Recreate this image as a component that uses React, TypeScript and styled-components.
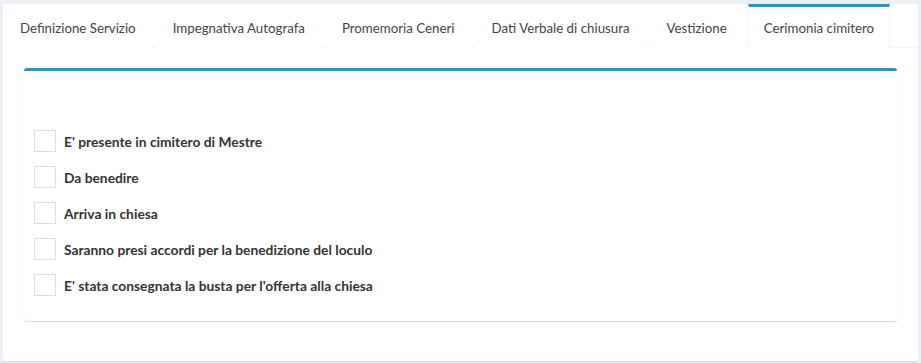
import React from 'react'
import styled, { createGlobalStyle } from 'styled-components'

const GlobalStyle = createGlobalStyle`
    html, body {
        margin: 0;
        padding: 0;
        background: #ecf0f5;
        font-family: Lato, "Open Sans", sans-serif;
        color: #333;
    }
`

const Page = styled.div`
    padding: 4px 3px 2px 3px;
`

const TabsBox = styled.div`
    background: #fff;
    border-radius: 3px;
    box-shadow: 0 1px 1px rgba(0, 0, 0, 0.1);
    height: 357px;
    box-sizing: border-box;
`

const TabBar = styled.ul`
    display: flex;
    margin: 0;
    padding: 0;
    list-style: none;
    border-bottom: 1px solid #f4f4f4;
    height: 44px;
    box-sizing: border-box;
`

const Tab = styled.li<{ $active?: boolean }>`
    display: flex;
    align-items: center;
    padding: 0 15px;
    margin-right: 5px;
    margin-bottom: -1px;
    font-size: 13.3px;
    color: #444;
    box-sizing: border-box;
    border-top: 3px solid ${p => (p.$active ? '#3c8dbc' : 'transparent')};
    border-left: 1px solid ${p => (p.$active ? '#f4f4f4' : 'transparent')};
    border-right: 1px solid ${p => (p.$active ? '#f4f4f4' : 'transparent')};
    background: #fff;
    white-space: nowrap;
    &:first-child {
        padding-left: 16px;
    }
`

const TabContent = styled.div`
    padding: 20px 21px 0 21px;
`

const Box = styled.div`
    border-top: 3px solid #3c8dbc;
    border-radius: 3px;
    background: #fff;
    box-shadow: 0 1px 1px rgba(0, 0, 0, 0.15);
    padding: 59px 10px 25px 10px;
    display: flex;
    flex-direction: column;
    gap: 14px;
`

const CheckRow = styled.label`
    display: flex;
    align-items: center;
    gap: 8px;
    font-size: 13.8px;
    font-weight: 700;
    color: #333;
`

const CheckBox = styled.span`
    width: 20px;
    height: 20px;
    border: 1px solid #dddddd;
    background: #fff;
    flex-shrink: 0;
`

const TABS = [
    'Definizione Servizio',
    'Impegnativa Autografa',
    'Promemoria Ceneri',
    'Dati Verbale di chiusura',
    'Vestizione',
    'Cerimonia cimitero'
]

const OPTIONS = [
    "E' presente in cimitero di Mestre",
    'Da benedire',
    'Arriva in chiesa',
    'Saranno presi accordi per la benedizione del loculo',
    "E' stata consegnata la busta per l'offerta alla chiesa"
]

const App = () => {
    return (
        <>
            <GlobalStyle />
            <Page>
                <TabsBox>
                    <TabBar>
                        {TABS.map((t, i) => (
                            <Tab key={t} $active={i === TABS.length - 1}>{t}</Tab>
                        ))}
                    </TabBar>
                    <TabContent>
                        <Box>
                            {OPTIONS.map(o => (
                                <CheckRow key={o}>
                                    <CheckBox />
                                    {o}
                                </CheckRow>
                            ))}
                        </Box>
                    </TabContent>
                </TabsBox>
            </Page>
        </>
    )
}

export default App
